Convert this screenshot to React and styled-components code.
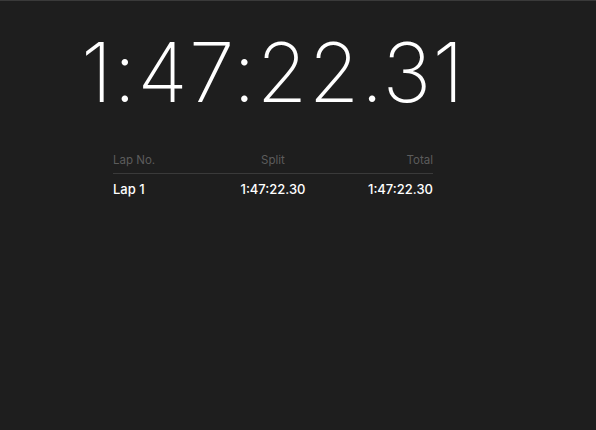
import React from 'react'
import styled, { createGlobalStyle } from 'styled-components'

const GlobalStyle = createGlobalStyle`
    html, body {
        margin: 0;
        height: 100%;
        background: #1e1e1e;
    }
    body {
        font-family: Inter, "Noto Sans", sans-serif;
        color: #fff;
    }
`

const Page = styled.div`
    min-height: 430px;
    box-sizing: border-box;
    border-top: 1px solid #3a3a3a;
    padding-left: 113px;
`

const Column = styled.div`
    width: 320px;
    display: flex;
    flex-direction: column;
    align-items: center;
`

const Clock = styled.div`
    margin-top: 14px;
    font-size: 82px;
    font-weight: 200;
    line-height: 116px;
    letter-spacing: 1.3px;
    white-space: nowrap;
`

const Table = styled.div`
    width: 100%;
    margin-top: 16px;
`

const Row = styled.div`
    display: grid;
    grid-template-columns: 1fr 1fr 1fr;
    align-items: center;
    height: ${p => p.$height}px;
    border-bottom: ${p => p.$divider ? '1px solid #3a3a3a' : 'none'};
    color: ${p => p.$color};
    font-size: ${p => p.$size}px;
    font-weight: ${p => p.$weight};
`

const Cell = styled.div`
    text-align: ${p => p.$align};
    white-space: nowrap;
`

const laps = [
    { name: 'Lap 1', split: '1:47:22.30', total: '1:47:22.30' },
]

const App = () => {
    return <>
        <GlobalStyle />
        <Page>
            <Column>
                <Clock>1:47:22.31</Clock>
                <Table>
                    <Row $height={26} $divider $color="#5c5c5c" $size={11.5} $weight={400}>
                        <Cell $align="left">Lap No.</Cell>
                        <Cell $align="center">Split</Cell>
                        <Cell $align="right">Total</Cell>
                    </Row>
                    {
                        laps.map(lap => (
                            <Row key={lap.name} $height={30} $color="#fff" $size={13} $weight={500}>
                                <Cell $align="left">{lap.name}</Cell>
                                <Cell $align="center">{lap.split}</Cell>
                                <Cell $align="right">{lap.total}</Cell>
                            </Row>
                        ))
                    }
                </Table>
            </Column>
        </Page>
    </>
}

export default App
